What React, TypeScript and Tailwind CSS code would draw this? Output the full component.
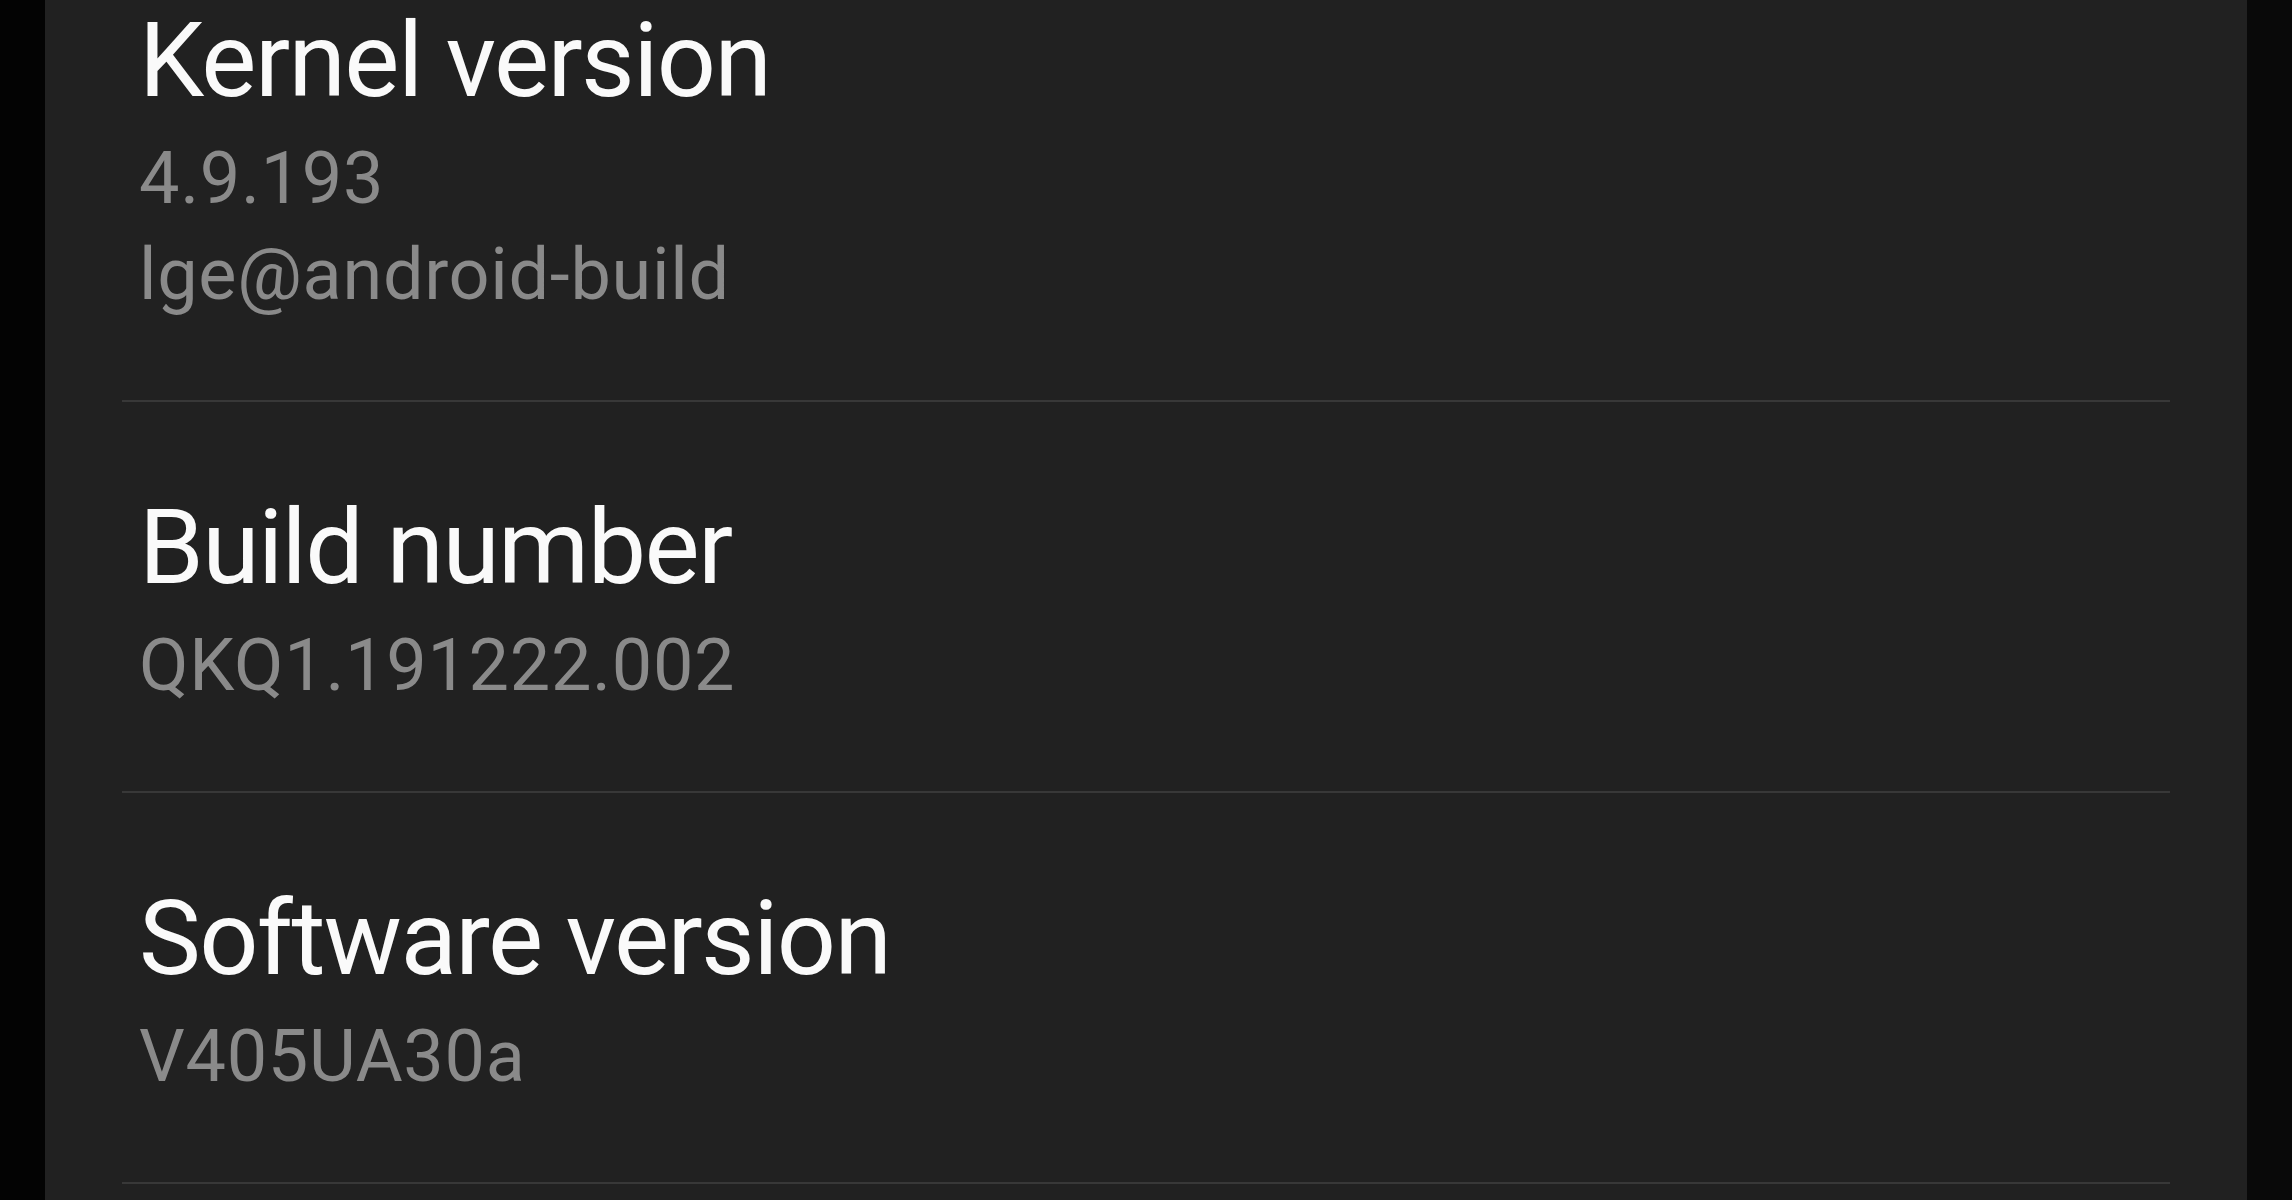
import React from "react";

type Item = { title: string; lines: string[] };

const items: Item[] = [
  { title: "Kernel version", lines: ["4.9.193", "lge@android-build"] },
  { title: "Build number", lines: ["QKQ1.191222.002"] },
  { title: "Software version", lines: ["V405UA30a"] },
];

export default function App() {
  return (
    <div
      className="flex h-[1200px] w-[2292px] overflow-hidden bg-black"
      style={{ fontFamily: "Roboto, 'Noto Sans', sans-serif" }}
    >
      <div className="w-[45px] shrink-0 bg-[#030303]" />
      <div className="flex-1 bg-[#212121] overflow-hidden">
        <div className="-mt-[85px] px-[77px]">
          {items.map((it) => (
            <div key={it.title}>
              <div className="pl-[17px] pt-[85px] pb-[77px]">
                <div className="text-[104px] leading-[122px] tracking-[-1.6px] text-[#fafafa] font-normal">
                  {it.title}
                </div>
                <div className="mt-[9px]">
                  {it.lines.map((l) => (
                    <div
                      key={l}
                      className="text-[72px] leading-[96px] tracking-[0.7px] text-[#8a8a8a]"
                    >
                      {l}
                    </div>
                  ))}
                </div>
              </div>
              <div className="h-[2px] bg-[#383838]" />
            </div>
          ))}
        </div>
      </div>
      <div className="w-[45px] shrink-0 bg-[#090909]" />
    </div>
  );
}
